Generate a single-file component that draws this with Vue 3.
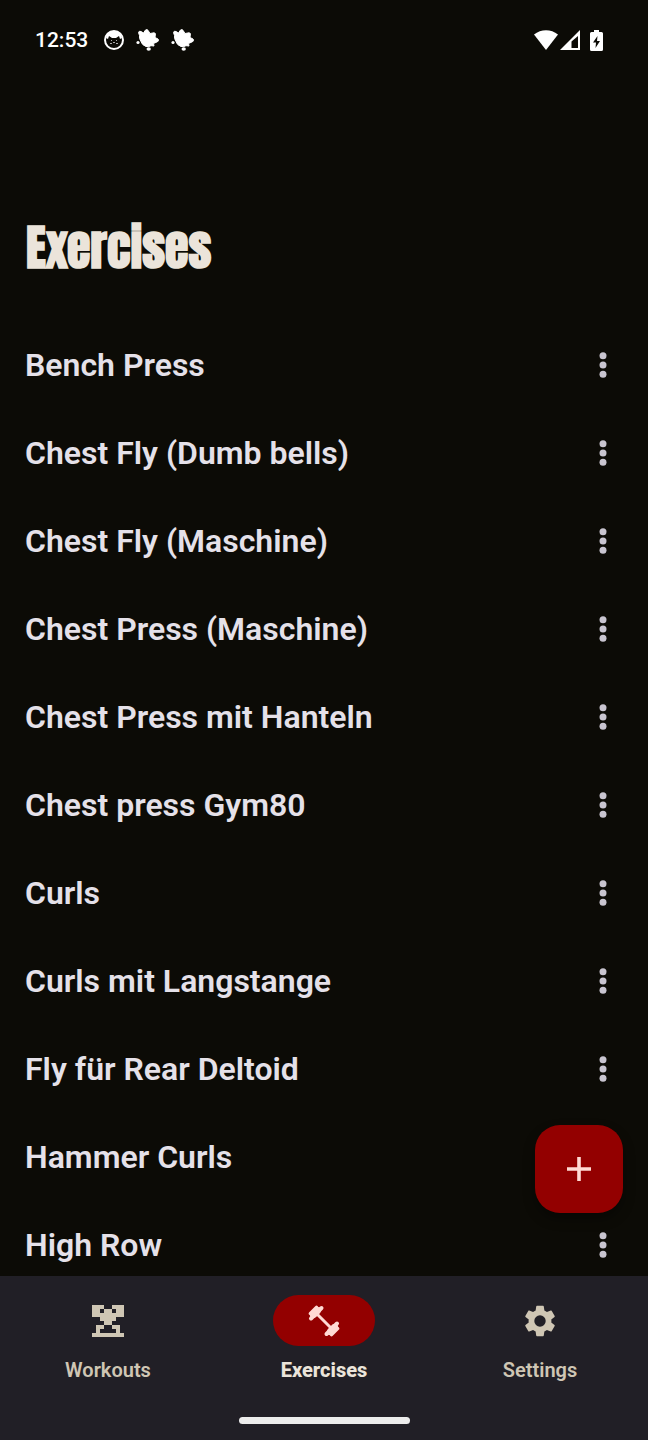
<script setup>
const exercises = [
  'Bench Press',
  'Chest Fly (Dumb bells)',
  'Chest Fly (Maschine)',
  'Chest Press (Maschine)',
  'Chest Press mit Hanteln',
  'Chest press Gym80',
  'Curls',
  'Curls mit Langstange',
  'Fly für Rear Deltoid',
  'Hammer Curls',
  'High Row',
]
</script>

<template>
  <div class="screen">
    <header class="status">
      <div class="group left">
        <time class="clock">12:53</time>
        <svg width="20" height="20" viewBox="0 0 20 20" aria-hidden="true">
          <circle cx="10" cy="10" r="9" fill="none" stroke="#fff" stroke-width="2" />
          <path d="M2 8C3 3 6 1 10 1s7 2 8 7l-2 1-1-3-3 2H8L5 6 4 9z" fill="#fff" />
          <path d="M7 10h1v1H7zM12 10h1v1h-1zM6 13h2v1H6zM12 13h2v1h-2zM9 12h2v1H9z" fill="#aaa" />
        </svg>
        <svg v-for="n in 2" :key="n" class="leaf" width="23" height="22" viewBox="0 0 23 22" aria-hidden="true">
          <path d="M3.500 6.500L2.500 3.500Q3 1.500 5 2.500l2.500 1.500L9.500 1q1.500-1 2.500.3l2 3.200 4-.7q2 .2 1.300 2.200l-.3 2.500 3 1.500q1.500 1.800-.5 2.700L17.500 14.500l.5 2.500-3-.3q-2 1.300-5 .8Q6 16 5 12.500 3 9.500 3.500 6.500z" fill="#fff" stroke="#fff" stroke-linejoin="round" />
          <circle cx="2" cy="13.500" r="1.600" fill="#fff" />
          <ellipse cx="12.700" cy="20" rx="2.200" ry="1.800" fill="#fff" />
        </svg>
      </div>
      <div class="group right">
        <svg width="24" height="20" viewBox="0 0 24 20" aria-hidden="true"><path d="M0 4.500C7-1.200 17-1.200 24 4.500L12 20z" fill="#fff" /></svg>
        <svg width="20" height="20" viewBox="0 0 20 20" aria-hidden="true"><path d="M20 0v20H0zM18 6l-6.500 5.500V18H18z" fill="#fff" fill-rule="evenodd" /></svg>
        <svg class="battery" width="13" height="21" viewBox="0 0 13 21" aria-hidden="true">
          <path d="M4 0h5v2h2.500q1.500 0 1.500 1.500v16q0 1.500-1.500 1.500h-10Q0 21 0 19.500v-16Q0 2 1.500 2H4z" fill="#fff" />
          <path d="M7.500 6L3 12.500h3L5.500 18 10 11H7z" fill="#0c0b06" />
        </svg>
      </div>
    </header>

    <main class="content">
      <h1 class="title">Exercises</h1>
      <ul class="list">
        <li v-for="name in exercises" :key="name" class="row">
          <span class="name">{{ name }}</span>
          <button class="more" type="button" :aria-label="`Options for ${name}`">
            <svg width="8" height="26" viewBox="0 0 8 26" fill="currentColor" aria-hidden="true">
              <circle cx="4" cy="3.700" r="3.500" /><circle cx="4" cy="13" r="3.500" /><circle cx="4" cy="22.300" r="3.500" />
            </svg>
          </button>
        </li>
      </ul>
      <button class="fab" type="button" aria-label="Add exercise">
        <svg width="24" height="24" viewBox="0 0 24 24" aria-hidden="true"><path d="M10.200 0h3.600v10.200H24v3.600H13.800V24h-3.600V13.800H0v-3.600h10.200z" fill="currentColor" /></svg>
      </button>
    </main>

    <nav class="bar" aria-label="Main">
      <div class="tabs">
        <a class="tab" href="#workouts">
          <span class="pill">
            <svg width="32" height="32" viewBox="0 0 32 32" fill="currentColor" fill-rule="evenodd" aria-hidden="true">
              <path d="M0 0h12v4h8V0h12v12h-8v4h-4v4h-8v-4H8v-4H0zM8 4v4h4V4zM20 4v4h4V4z" />
              <path d="M0 28h4v-8h8v4H8v4h16v-4h-4v-4h8v8h4v4H0z" />
            </svg>
          </span>
          <span class="label">Workouts</span>
        </a>
        <a class="tab active" href="#exercises" aria-current="page">
          <span class="pill">
            <svg width="32" height="32" viewBox="0 0 32 32" fill="none" stroke="currentColor" stroke-linecap="round" aria-hidden="true">
              <path d="M6 6l20 20" stroke-width="3" />
              <path d="M3 13.500L13.500 3M18.500 29L29 18.500" stroke-width="4" />
              <path d="M2.500 8.500l6-6M23.500 29.500l6-6" stroke-width="3.600" />
              <path d="M4 10.500L10.500 4M21.500 28l6.500-6.500" stroke-width="4" />
              <path d="M6.500 10.500l4-4M21.500 25.500l4-4" stroke-width="4.500" />
            </svg>
          </span>
          <span class="label">Exercises</span>
        </a>
        <a class="tab" href="#settings">
          <span class="pill">
            <svg width="38" height="38" viewBox="0 0 24 24" fill="currentColor" aria-hidden="true">
              <path d="M19.140 12.940c.04-.3.060-.61.060-.94 0-.32-.02-.64-.07-.94l2.030-1.580a.49.49 0 0 0 .12-.61l-1.920-3.320a.488.488 0 0 0-.59-.22l-2.390.96c-.5-.38-1.030-.7-1.620-.94l-.36-2.540a.484.484 0 0 0-.48-.41h-3.840c-.24 0-.43.17-.47.41l-.36 2.540c-.59.24-1.130.57-1.620.94l-2.390-.96c-.22-.08-.47 0-.59.22L2.740 8.870c-.12.21-.08.47.12.61l2.030 1.580c-.05.3-.09.63-.09.94s.02.64.07.94l-2.030 1.580a.49.49 0 0 0-.12.61l1.920 3.320c.12.22.37.29.59.22l2.390-.96c.5.38 1.030.7 1.620.94l.36 2.540c.05.24.24.41.48.41h3.840c.24 0 .44-.17.47-.41l.36-2.540c.59-.24 1.130-.56 1.620-.94l2.390.96c.22.08.47 0 .59-.22l1.920-3.320c.12-.22.07-.47-.12-.61zM12 15.600A3.600 3.600 0 1 1 12 8.400a3.600 3.600 0 0 1 0 7.200z" />
            </svg>
          </span>
          <span class="label">Settings</span>
        </a>
      </div>
      <div class="handle"></div>
    </nav>
  </div>
</template>

<style>
body {
  background: #0c0b06;
}
</style>

<style scoped>
.screen {
  display: flex;
  flex-direction: column;
  height: 100vh;
  background: #0c0b06;
  color: #e5e1e9;
  font-family: Roboto, "Liberation Sans", sans-serif;
}

.status {
  flex: none;
  display: flex;
  align-items: center;
  justify-content: space-between;
  height: 80px;
  padding: 0 45px 0 35px;
  color: #fff;
}

.group {
  display: flex;
  align-items: center;
}

.clock {
  margin-right: 16px;
  font-size: 21px;
  font-weight: 500;
}

.leaf {
  margin-left: 12px;
}

.right {
  gap: 2px;
}

.battery {
  margin-left: 8px;
}

.content {
  position: relative;
  flex: 1;
  min-height: 0;
  overflow: hidden;
}

.title {
  margin: 136px 0 41px;
  padding: 0 26px;
  color: #ebe4da;
  font-family: Anton, Impact, "Liberation Sans Narrow", "Roboto Condensed", Roboto, sans-serif;
  font-size: 48px;
  font-weight: 900;
  line-height: 64px;
}

.list {
  margin: 0;
  padding: 0;
  list-style: none;
}

.row {
  display: flex;
  align-items: center;
  justify-content: space-between;
  height: 88px;
  padding: 0 13px 0 25px;
}

.name {
  font-size: 32px;
  font-weight: 600;
}

.more {
  display: grid;
  place-items: center;
  width: 64px;
  height: 64px;
  padding: 0;
  border: 0;
  background: none;
  color: #c9c5d0;
}

.fab {
  position: absolute;
  right: 25px;
  bottom: 63px;
  display: grid;
  place-items: center;
  width: 88px;
  height: 88px;
  padding: 0;
  border: 0;
  border-radius: 25px;
  background: #930000;
  color: #ffdad4;
  box-shadow: 0 6px 12px rgba(0, 0, 0, 0.35);
}

.bar {
  flex: none;
  display: flex;
  flex-direction: column;
  align-items: center;
  justify-content: space-between;
  height: 164px;
  padding: 19px 0 16px;
  box-sizing: border-box;
  background: #211f26;
}

.tabs {
  display: flex;
  width: 100%;
}

.tab {
  flex: 1;
  display: flex;
  flex-direction: column;
  align-items: center;
  gap: 12px;
  color: #cfc6b4;
  text-decoration: none;
}

.pill {
  display: grid;
  place-items: center;
  width: 102px;
  height: 51px;
  border-radius: 26px;
}

.label {
  font-size: 20px;
  font-weight: 600;
  line-height: 24px;
}

.active {
  color: #ebe4da;
}

.active .pill {
  background: #930000;
  color: #ffdad4;
}

.active .label {
  font-weight: 800;
}

.handle {
  width: 171px;
  height: 7px;
  border-radius: 4px;
  background: #ececec;
}
</style>
